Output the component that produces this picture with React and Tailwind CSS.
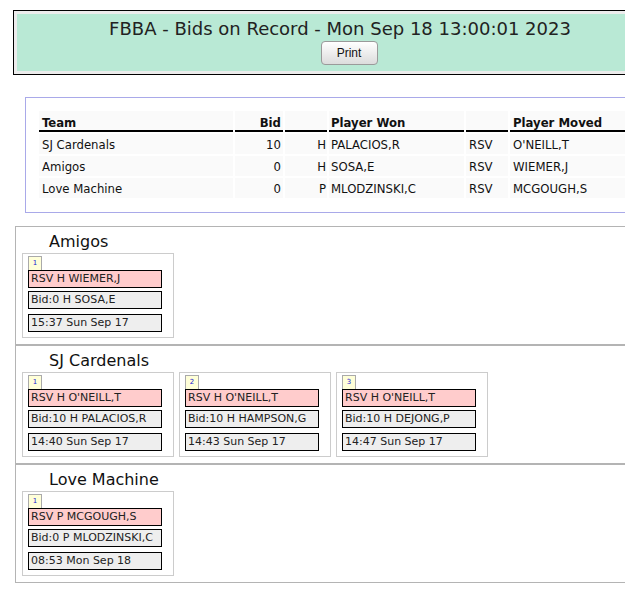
import React from "react";

const bids = [
  { team: "SJ Cardenals", bid: 10, pos: "H", won: "PALACIOS,R", rsv: "RSV", moved: "O'NEILL,T" },
  { team: "Amigos", bid: 0, pos: "H", won: "SOSA,E", rsv: "RSV", moved: "WIEMER,J" },
  { team: "Love Machine", bid: 0, pos: "P", won: "MLODZINSKI,C", rsv: "RSV", moved: "MCGOUGH,S" },
];

const teams = [
  {
    name: "Amigos",
    cards: [{ n: 1, rsv: "RSV H WIEMER,J", bid: "Bid:0 H SOSA,E", time: "15:37 Sun Sep 17" }],
  },
  {
    name: "SJ Cardenals",
    cards: [
      { n: 1, rsv: "RSV H O'NEILL,T", bid: "Bid:10 H PALACIOS,R", time: "14:40 Sun Sep 17" },
      { n: 2, rsv: "RSV H O'NEILL,T", bid: "Bid:10 H HAMPSON,G", time: "14:43 Sun Sep 17" },
      { n: 3, rsv: "RSV H O'NEILL,T", bid: "Bid:10 H DEJONG,P", time: "14:47 Sun Sep 17" },
    ],
  },
  {
    name: "Love Machine",
    cards: [{ n: 1, rsv: "RSV P MCGOUGH,S", bid: "Bid:0 P MLODZINSKI,C", time: "08:53 Mon Sep 18" }],
  },
];

const verdana = "font-['DejaVu_Sans','Verdana',sans-serif]";
const tahoma = "font-['DejaVu_Sans_Condensed','Liberation_Sans',sans-serif]";

export default function App() {
  return (
    <div className="w-[625px] h-[593px] overflow-hidden bg-white text-[#111]">
      <div className="w-[720px] pt-[10px] pl-[13px]">
        <header className="w-[672px] border border-black bg-[#ececec] p-[3px]">
          <div className="bg-[#b9e9d5] h-[57px] flex flex-col items-center">
            <h1 className={`${verdana} text-[18px] leading-[22px] mt-[4px] mr-[18px] text-[#222]`}>
              FBBA - Bids on Record - Mon Sep 18 13:00:01 2023
            </h1>
            <button className="mt-[1px] w-[57px] h-[24px] rounded-[4px] border border-[#9a9a9a] bg-gradient-to-b from-white to-[#dcdcdc] text-[12px] font-['Liberation_Sans',Arial,sans-serif] text-[#111]">
              Print
            </button>
          </div>
        </header>
      </div>

      <div className="w-[720px] pl-[25px] mt-[22px]">
        <div className="border border-[#a9a9e9] pt-[11px] pb-[12px] pl-[11px]">
          <table className={`${tahoma} text-[13px] leading-[15px] border-separate border-spacing-[2px]`}>
            <thead>
              <tr className="bg-[#fafafa] font-bold text-left align-bottom">
                <th className="w-[194px] px-[3px] h-[21px] border-b-2 border-black">Team</th>
                <th className="w-[48px] px-[2px] border-b-2 border-black text-right">Bid</th>
                <th className="w-[42px] border-b-2 border-black"></th>
                <th className="w-[135px] px-[2px] border-b-2 border-black">Player Won</th>
                <th className="w-[42px] border-b-2 border-black"></th>
                <th className="w-[140px] px-[3px] border-b-2 border-black">Player Moved</th>
              </tr>
            </thead>
            <tbody>
              {bids.map((b) => (
                <tr key={b.team} className="bg-[#fafafa]">
                  <td className="px-[3px] h-[20px]">{b.team}</td>
                  <td className="px-[2px] text-right">{b.bid}</td>
                  <td className="px-[1px] text-right">{b.pos}</td>
                  <td className="px-[2px]">{b.won}</td>
                  <td className="px-[3px]">{b.rsv}</td>
                  <td className="px-[3px]">{b.moved}</td>
                </tr>
              ))}
            </tbody>
          </table>
        </div>
      </div>

      <div className="w-[720px] pl-[15px] mt-[13px]">
        {teams.map((t) => (
          <section key={t.name} className="border border-[#b4b4b4] px-[6px] pb-[6px]">
            <h2 className={`${verdana} text-[16px] leading-[20px] pl-[27px] pt-[5px] pb-[1px] text-[#111]`}>
              {t.name}
            </h2>
            <div className="flex gap-[5px]">
              {t.cards.map((c) => (
                <Card key={c.n} {...c} />
              ))}
            </div>
          </section>
        ))}
      </div>
    </div>
  );
}

function Card({ n, rsv, bid, time }) {
  return (
    <div className={`${verdana} w-[152px] border border-[#cccccc] pl-[5px] pt-[2px] pb-[5px]`}>
      <div className="w-[14px] h-[14px] border border-[#aaaaaa] border-b-0 bg-[#ffffd8] text-[7px] leading-[13px] text-center text-[#2020d0]">
        {n}
      </div>
      <Box className="bg-[#ffcccc]">{rsv}</Box>
      <Box className="bg-[#eeeeee] mt-[3px]">{bid}</Box>
      <Box className="bg-[#eeeeee] mt-[5px]">{time}</Box>
    </div>
  );
}

function Box({ className, children }) {
  return (
    <div className={`w-[134px] h-[18px] border border-black px-[2px] text-[11px] leading-[16px] text-[#222] whitespace-nowrap overflow-hidden ${className}`}>
      {children}
    </div>
  );
}
